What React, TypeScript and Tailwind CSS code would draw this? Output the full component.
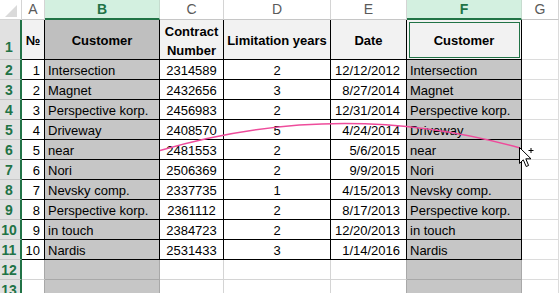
import { ReactNode } from "react";

const rows = [
    ["1", "Intersection", "2314589", "2", "12/12/2012", "Intersection"],
    ["2", "Magnet", "2432656", "3", "8/27/2014", "Magnet"],
    ["3", "Perspective korp.", "2456983", "2", "12/31/2014", "Perspective korp."],
    ["4", "Driveway", "2408570", "5", "4/24/2014", "Driveway"],
    ["5", "near", "2481553", "2", "5/6/2015", "near"],
    ["6", "Nori", "2506369", "2", "9/9/2015", "Nori"],
    ["7", "Nevsky comp.", "2337735", "1", "4/15/2013", "Nevsky comp."],
    ["8", "Perspective korp.", "2361112", "2", "8/17/2013", "Perspective korp."],
    ["9", "in touch", "2384723", "2", "12/20/2013", "in touch"],
    ["10", "Nardis", "2531433", "3", "1/14/2016", "Nardis"],
];

const letters = ["A", "B", "C", "D", "E", "F", "G"];

// alignment of data cells per column A..F
const align = [
    "justify-end pr-[4px]",
    "justify-start pl-[3px]",
    "justify-center",
    "justify-center",
    "justify-end pr-[6px]",
    "justify-start pl-[3px]",
];

function RowHead({ n, tall }: { n: number; tall?: boolean }) {
    return (
        <div
            className={
                "flex justify-center pr-[2px] bg-[#e1e1e1] border-b border-b-[#c6c6c6] border-r-2 border-r-[#217346] text-[14px] font-bold text-[#217346] " +
                (tall ? "items-end pb-[1px]" : "items-center pt-[1px]")
            }
        >
            {n}
        </div>
    );
}

function Cell({ className, children }: { className: string; children?: ReactNode }) {
    return <div className={"flex items-center overflow-hidden whitespace-nowrap " + className}>{children}</div>;
}

export default function App() {
    return (
        <div className="relative w-[559px] h-[293px] overflow-hidden bg-white font-['Liberation_Sans',Arial,sans-serif] text-[13px] text-black">
            <div className="grid grid-cols-[22px_23px_115px_64px_107px_76px_115px_37px] grid-rows-[20px_40px_repeat(12,20px)]">
                {/* corner */}
                <div className="relative bg-white border-r border-b border-[#d4d4d4]">
                    <svg className="absolute left-[5px] top-[5px]" width="12" height="12" viewBox="0 0 12 12">
                        <path d="M12 0 L12 12 L0 12 Z" fill="#dadada" />
                    </svg>
                </div>

                {/* column letters */}
                {letters.map((l) =>
                    l === "B" || l === "F" ? (
                        <div
                            key={l}
                            className="flex items-center justify-center bg-[#d3f0e0] border-r border-r-[#c6dccf] border-b-2 border-b-[#217346] text-[14px] font-bold text-[#217346]"
                        >
                            {l}
                        </div>
                    ) : (
                        <div
                            key={l}
                            className="flex items-center justify-center bg-white border-r border-r-[#d4d4d4] border-b border-b-[#c6c6c6] text-[14px] text-[#5a5a5a]"
                        >
                            {l}
                        </div>
                    ),
                )}

                {/* row 1: table headings */}
                <RowHead n={1} tall />
                <Cell className="justify-center pt-[3px] bg-[#f2f2f2] border-r border-b border-black font-bold">№</Cell>
                <Cell className="justify-center pt-[3px] bg-[#bfbfbf] border-r border-b border-black font-bold">Customer</Cell>
                <div className="flex flex-col items-center justify-center pt-[3px] bg-[#f2f2f2] border-r border-b border-black font-bold leading-[19px]">
                    <span>Contract</span>
                    <span>Number</span>
                </div>
                <Cell className="justify-center pt-[3px] bg-[#f2f2f2] border-r border-b border-black font-bold">Limitation years</Cell>
                <Cell className="justify-center pt-[3px] bg-[#f2f2f2] border-r border-b border-black font-bold">Date</Cell>
                <Cell className="justify-center pt-[3px] bg-[#f2f2f2] border-r border-b border-black font-bold outline outline-1 outline-[#217346] -outline-offset-[3px]">
                    Customer
                </Cell>
                <Cell className="bg-white border-r border-b border-[#dcdcdc]" />

                {/* data rows */}
                {rows.map((r, i) => (
                    <div key={i} className="contents">
                        <RowHead n={i + 2} />
                        {r.map((v, j) => (
                            <Cell
                                key={j}
                                className={
                                    align[j] +
                                    " pt-[2px] border-r border-b border-black " +
                                    (j === 1 || j === 5 ? "bg-[#c6c6c6]" : "bg-white")
                                }
                            >
                                {v}
                            </Cell>
                        ))}
                        <Cell className="bg-white border-r border-b border-[#dcdcdc]" />
                    </div>
                ))}

                {/* empty rows */}
                {[12, 13].map((n) => (
                    <div key={n} className="contents">
                        <RowHead n={n} />
                        <Cell className="bg-white border-r border-r-[#a8a8a8] border-b border-b-[#d4d4d4]" />
                        <Cell className="bg-[#c6c6c6] border-r border-r-[#a8a8a8] border-b border-b-[#a8a8a8]" />
                        <Cell className="bg-white border-r border-b border-[#d4d4d4]" />
                        <Cell className="bg-white border-r border-b border-[#d4d4d4]" />
                        <Cell className="bg-white border-r border-r-[#a8a8a8] border-b border-b-[#d4d4d4]" />
                        <Cell className="bg-[#c6c6c6] border-r border-r-[#a8a8a8] border-b border-b-[#a8a8a8]" />
                        <Cell className="bg-white border-r border-b border-[#dcdcdc]" />
                    </div>
                ))}
            </div>

            {/* drag trail and mouse cursor */}
            <svg className="absolute inset-0 pointer-events-none" width="559" height="293" viewBox="0 0 559 293">
                <path d="M160 150.5 Q340 97.8 520 148" fill="none" stroke="#ee4c9b" strokeWidth="1.4" />
                <path
                    d="M519.5 147.5 L519.5 163.5 L523.3 159.8 L526.2 166.5 L528.6 165.5 L525.8 158.8 L531 158.8 Z"
                    fill="#fff"
                    stroke="#000"
                    strokeWidth="1"
                    strokeLinejoin="miter"
                />
                <path d="M528.5 150.5 H533.5 M531 148 V153" stroke="#000" strokeWidth="1" />
            </svg>
        </div>
    );
}
